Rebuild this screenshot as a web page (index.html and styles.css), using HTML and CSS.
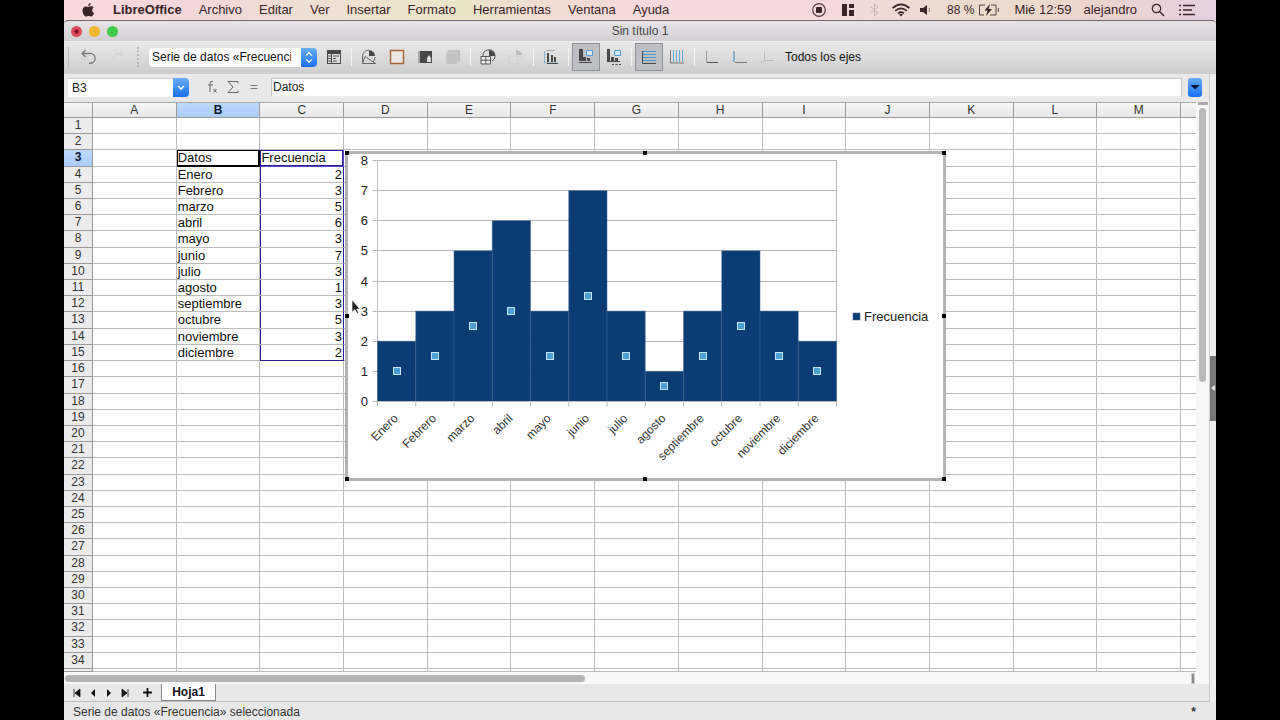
FILE: index.html
```
<!DOCTYPE html>
<html lang="es">
<head>
<meta charset="utf-8">
<title>Sin título 1</title>
<link rel="stylesheet" href="styles.css">
</head>
<body>
<div class="desktop">
  <header class="menubar">
    <svg class="apple" viewBox="0 0 14 16" width="14" height="16" aria-hidden="true"><path d="M9.8 1c.1 1.500-1.100 2.900-2.600 2.900C7 2.500 8.400 1.100 9.800 1zM7.300 5c.7 0 1.500-.7 2.800-.7 1 0 2 .5 2.600 1.400-2.300 1.300-1.900 4.500.4 5.400-.5 1.400-1.700 3.500-3 3.500-.9 0-1.300-.6-2.400-.6s-1.500.6-2.400.6C3.600 14.600 1.500 11.500 1.500 8.700 1.500 5.900 3.200 4.400 4.900 4.400 6 4.400 6.700 5 7.300 5z" fill="#3a2427"/></svg>
    <nav class="menus">
      <button class="app-name">LibreOffice</button>
      <button>Archivo</button>
      <button>Editar</button>
      <button>Ver</button>
      <button>Insertar</button>
      <button>Formato</button>
      <button>Herramientas</button>
      <button>Ventana</button>
      <button>Ayuda</button>
    </nav>
    <div class="tray">
      <svg width="16" height="16" viewBox="0 0 16 16"><circle cx="8" cy="8" r="6.300" fill="none" stroke="#5a4044" stroke-width="1.200"/><rect x="5" y="5" width="6" height="6" rx="1" fill="#3a2427"/></svg>
      <svg width="14" height="14" viewBox="0 0 14 14"><path d="M1 1h5v12H1zM8 1h5v4H8zM8 7h5v6H8z" fill="#3a2427"/></svg>
      <svg width="12" height="14" viewBox="0 0 12 14"><path d="M2 4l7 6-3.500 3V1L9 4l-7 6" fill="none" stroke="#c9b3b4"/></svg>
      <svg class="wifi" width="20" height="14" viewBox="0 0 20 14"><g fill="none" stroke="#3a2427" stroke-width="1.700"><path d="M1.500 5.200q8.500-7.500 17 0M4.200 7.800q5.800-5 11.600 0M7 10.300q3-2.500 6 0"/></g><path d="M8 11.500q2-1.500 4 0L10 13.500z" fill="#3a2427"/></svg>
      <svg class="sound" width="14" height="12" viewBox="0 0 14 12"><path d="M1 4h3l4-3v10L4 8H1z" fill="#3a2427"/><path d="M10 4q1.500 2 0 4" fill="none" stroke="#8d7477"/></svg>
      <span class="battery-level">88 %</span>
      <svg class="battery" width="22" height="14" viewBox="0 0 22 14"><path d="M7 2H1.500v10H6M13 2h5v10h-6M20.300 5v4" fill="none" stroke="#5a4044"/><path d="M12 1L6.500 7.500h3L8 13l6-7h-3.300z" fill="#3a2427"/></svg>
      <span class="clock">Mié 12:59</span>
      <span class="user">alejandro</span>
      <svg class="search" width="14" height="14" viewBox="0 0 14 14"><circle cx="5.500" cy="5.500" r="4.200" fill="none" stroke="#3a2427" stroke-width="1.200"/><path d="M8.800 8.800L13 13" stroke="#3a2427" stroke-width="1.500"/></svg>
      <svg width="16" height="12" viewBox="0 0 16 12"><path d="M0 1.500h2M0 6h2M0 10.500h2M4 1.500h12M4 6h9M4 10.500h12" stroke="#3a2427" stroke-width="1.500"/></svg>
    </div>
  </header>

  <main class="window">
    <div class="titlebar">
      <div class="lights">
        <button class="light close" aria-label="Cerrar"></button>
        <button class="light minimize" aria-label="Minimizar"></button>
        <button class="light expand" aria-label="Ampliar"></button>
      </div>
      <h1>Sin título 1</h1>
    </div>

    <div class="toolbar">
      <span class="edge"></span>
      <button class="tool wide" aria-label="Deshacer"><svg viewBox="0 0 18 18"><path d="M6.500 2L3 5.500 6.500 9M3 5.500h7a5 5 0 0 1 3 9.500l-3 .5" fill="none" stroke="#777" stroke-width="1.300"/></svg></button>
      <button class="tool wide" aria-label="Rehacer"><svg viewBox="0 0 18 18"><path d="M11 3l3 3-3 3M14 6H9q-4 0-4 5" fill="none" stroke="#cfcfcf"/></svg></button>
      <span class="grip"></span>
      <span class="picker">
        <select aria-label="Elemento del gráfico"><option>Serie de datos «Frecuencia»</option></select>
        <svg viewBox="0 0 16 20" aria-hidden="true"><path d="M5 8l3-3 3 3M5 12l3 3 3-3" fill="none" stroke="#fff" stroke-width="1.400"/></svg>
      </span>
      <button class="tool" aria-label="Formato de selección"><svg viewBox="0 0 18 18"><path d="M2 2h14v14H2z" fill="#484848"/><path d="M3 6h3v9H3zM7 6h8v9H7z" fill="#ddd"/><path d="M3 8h3M3 10.500h3M3 13h3M8 8h6M8 10.500h3M8 13h4" stroke="#555"/></svg></button>
      <span class="sep"></span>
      <button class="tool" aria-label="Tipo de gráfico"><svg viewBox="0 0 18 18"><path d="M2.500 14.500V8A6.500 6.500 0 0 1 9 2M15 9q0 3-2 5M2.500 15.500h13L5 8.500z" fill="none" stroke="#666"/><path d="M9 2v6h6q0-5-6-6z" fill="#484848"/></svg></button>
      <button class="tool" aria-label="Área del gráfico"><svg viewBox="0 0 18 18"><path d="M2.500 2.500h13v13h-13z" fill="#e9e6e3" stroke="#a86538" stroke-width="1.400"/></svg></button>
      <button class="tool" aria-label="Plano lateral"><svg viewBox="0 0 18 18"><path d="M2 3h14v12H2z" fill="#484848"/><path d="M2 3h2v12H2z" fill="#aaa"/><path d="M13 7l2 3v4h-4v-4z" fill="#ddd"/></svg></button>
      <button class="tool" aria-label="Vista 3D" disabled><svg viewBox="0 0 18 18"><path d="M2 5l3-3h11v11l-3 3H2z" fill="#c2c2c2"/><path d="M2 5h11v11" fill="none" stroke="#cecece"/></svg></button>
      <span class="sep"></span>
      <button class="tool" aria-label="Tabla de datos"><svg viewBox="0 0 18 18"><path d="M4 8a6 6 0 1 1 9 5" fill="none" stroke="#555"/><path d="M10 2v6h6q0-5-6-6z" fill="#484848"/><path d="M2 8.500h9.500v7.500H2zM2 12.200h9.500M6.800 8.500V16" fill="#eee" stroke="#555"/></svg></button>
      <button class="tool" aria-label="Datos" disabled><svg viewBox="0 0 18 18"><path d="M9 2v5h6q0-4-6-5z" fill="#bcbcbc"/><path d="M2 8h9v8H2zM11 8h4v4" fill="none" stroke="#cfcfcf"/></svg></button>
      <span class="sep"></span>
      <button class="tool" aria-label="Títulos"><svg viewBox="0 0 18 18"><path d="M2.500 3v12h12" fill="none" stroke="#8bb5d3"/><path d="M4 2.500h9" stroke="#aaa"/><path d="M5 5h2v9H5zM9 7h2v7H9zM12 9h2v5h-2zM5 15h11v1H5z" fill="#484848"/></svg></button>
      <span class="sep"></span>
      <button class="tool active" aria-label="Leyenda" aria-pressed="true"><svg viewBox="0 0 18 18"><path d="M2 1h4v12H2zM6 9h3v4H6zM10 10h3v3h-3zM2 14h13v1H2z" fill="#484848"/><path d="M9.500 2.500h6v5h-6z" fill="#d7e8f2" stroke="#4aa0d5"/></svg></button>
      <button class="tool" aria-label="Eje de leyenda"><svg viewBox="0 0 18 18"><path d="M2 1h3v12H2zM6 9h3v4H6zM10 10h3v3h-3zM2 13h13v1H2z" fill="#484848"/><path d="M9.500 2.500h6v5h-6z" fill="#d7e8f2" stroke="#4aa0d5"/><path d="M7 16.500h9" stroke="#444" stroke-dasharray="2 1.500"/></svg></button>
      <span class="sep"></span>
      <button class="tool active" aria-label="Cuadrículas horizontales" aria-pressed="true"><svg viewBox="0 0 18 18"><path d="M3 3.500h13M3 6.500h13M3 9.500h13M3 12.500h13" stroke="#4a9acb"/><path d="M2.500 3v12.500H16" fill="none" stroke="#484848"/></svg></button>
      <button class="tool" aria-label="Cuadrículas verticales"><svg viewBox="0 0 18 18"><path d="M5.500 2v12M8.500 2v12M11.500 2v12M14.500 2v12" stroke="#5da9d6"/><path d="M2.500 2v13H16" fill="none" stroke="#777"/></svg></button>
      <span class="sep"></span>
      <button class="tool" aria-label="Eje X"><svg viewBox="0 0 18 18"><path d="M3.500 3v11.500" stroke="#999"/><path d="M4 14.500h11" stroke="#555"/></svg></button>
      <button class="tool" aria-label="Eje Y"><svg viewBox="0 0 18 18"><path d="M3 3v11" stroke="#6aa2c8" stroke-width="1.500"/><path d="M4 14.500h12" stroke="#777"/></svg></button>
      <button class="tool" aria-label="Eje Z" disabled><svg viewBox="0 0 18 18"><path d="M5.500 4v8.500H15M5 13l-3 2" fill="none" stroke="#bdbdbd"/></svg></button>
      <button class="axes">Todos los ejes</button>
    </div>

    <div class="workspace">
      <div class="document">
        <div class="formula-bar">
          <span class="namebox">
            <input value="B3" aria-label="Cuadro de nombre">
            <button aria-label="Mostrar nombres"><svg viewBox="0 0 16 18"><path d="M5 8l3 3 3-3" fill="none" stroke="#fff" stroke-width="1.400"/></svg></button>
          </span>
          <button class="fx" aria-label="Asistente de funciones"><svg viewBox="0 0 14 16"><path d="M8 2.500q-3-1-3 2V13M3 6h5M8.500 10l3 3.500M11.500 10l-3 3.500" fill="none" stroke="#666"/></svg></button>
          <button class="fx" aria-label="Suma"><svg viewBox="0 0 14 16"><path d="M12 4.500V2.500H2l5 5.500-5 5.500h10v-2" fill="none" stroke="#666"/></svg></button>
          <button class="fx" aria-label="Función"><svg viewBox="0 0 14 16"><path d="M3.500 6.500h7M3.500 9.500h7" stroke="#777"/></svg></button>
          <input class="formula" value="Datos" aria-label="Línea de entrada">
          <button class="expand-formula" aria-label="Expandir barra de fórmulas"><svg viewBox="0 0 14 18"><path d="M2.500 7h9L7 11.500z" fill="#06133a"/></svg></button>
        </div>

        <div class="sheet-area">
          <div class="sheet-view">
            <table class="sheet">
              <thead></thead>
              <tbody></tbody>
            </table>
            <svg class="chart" viewBox="0 0 601 330" role="img" aria-label="Gráfico de Frecuencia"></svg>
            <svg class="pointer" viewBox="0 0 10 16" aria-hidden="true"><path d="M1 1v12l3-2.500 2 4 1.500-.8-1.800-3.700H9z" fill="#222" stroke="#eee" stroke-width=".7"/></svg>
          </div>
          <div class="vscroll"><span class="splitter"></span><span class="thumb"></span></div>
        </div>

        <div class="hscroll"><span class="thumb"></span><span class="splitter"></span></div>

        <div class="tabs">
          <button aria-label="Primera hoja"><svg viewBox="0 0 10 10"><path d="M2 1v8M8 1v8L3 5z" fill="#111" stroke="#111" stroke-width=".8"/></svg></button>
          <button aria-label="Hoja anterior"><svg viewBox="0 0 10 10"><path d="M7 1v8L3 5z" fill="#111"/></svg></button>
          <button aria-label="Hoja siguiente"><svg viewBox="0 0 10 10"><path d="M3 1v8l4-4z" fill="#111"/></svg></button>
          <button aria-label="Última hoja"><svg viewBox="0 0 10 10"><path d="M8 1v8M2 1v8l5-4z" fill="#111" stroke="#111" stroke-width=".8"/></svg></button>
          <button class="add" aria-label="Añadir hoja"><svg viewBox="0 0 10 10"><path d="M5 1v8M1 5h8" stroke="#111" stroke-width="1.600"/></svg></button>
          <button class="tab">Hoja1</button>
        </div>
      </div>
      <aside class="side-strip"><button aria-label="Mostrar barra lateral"><svg viewBox="0 0 6 8"><path d="M5 1v6L1 4z" fill="#e6e6e6"/></svg></button></aside>
    </div>

    <footer class="status">
      <span>Serie de datos «Frecuencia» seleccionada</span>
      <span class="modified">*</span>
    </footer>
  </main>
</div>
<script src="app.js"></script>
</body>
</html>
```
FILE: styles.css
```
* { box-sizing: border-box; }
body {
  margin: 0;
  background: #000;
  color: #222;
  font: 12px/16px "Liberation Sans", Arial, sans-serif;
}
button, input, select { font: inherit; color: inherit; margin: 0; padding: 0; border: 0; background: none; }
svg { display: block; }
.desktop {
  height: 100vh;
  margin: 0 5vw;
  display: flex;
  flex-direction: column;
  overflow: hidden;
}

.menubar {
  flex: none;
  height: 20px;
  display: flex;
  align-items: center;
  padding: 0 21px 0 17px;
  font-size: 13px;
  color: #3a2427;
  white-space: nowrap;
  background: linear-gradient(90deg, #f6d9dc 0%, #f3d8d9 12%, #eee2cf 26%, #e9e4c8 34%, #f1dcd2 42%, #f5dadd 52%, #f3d9dd 66%, #ecdccb 80%, #ecd4cf 90%, #e6cfe0 100%);
}
.menus { display: flex; gap: 17px; margin-left: 18px; }
.app-name { font-weight: bold; }
.tray { margin-left: auto; display: flex; align-items: center; }
.tray > * { margin-left: 14px; }
.tray > .wifi { margin-left: 10px; }
.tray > .sound { margin-left: 8px; }
.tray > .battery-level { font-size: 12px; }
.tray > .battery { margin-left: 4px; }
.tray > .user { margin-left: 12px; }

.window { flex: 1; min-height: 0; display: flex; flex-direction: column; background: #e8e8e8; }
.titlebar {
  flex: none;
  height: 21px;
  display: grid;
  grid-template-columns: 1fr auto 1fr;
  align-items: center;
  border-top: 1px solid #75696b;
  border-radius: 4px 4px 0 0;
  background: linear-gradient(#e6e4e6, #d2d0d2);
}
.titlebar h1 { margin: 0; font-size: 12px; font-weight: normal; color: #444; }
.lights { display: flex; gap: 7px; padding-left: 7px; }
.light { width: 11px; height: 11px; border-radius: 50%; }
.close { background: radial-gradient(circle, #7b1020 0 1px, #e04b5e 3px); }
.minimize { background: #f5b52e; }
.expand { background: #3ecb45; }

.toolbar {
  flex: none;
  height: 33px;
  display: flex;
  align-items: center;
  padding-bottom: 2px;
  border-top: 1px solid #efefef;
  background: linear-gradient(#e9e9e9, #cdcdcd);
  white-space: nowrap;
}
.edge { width: 5px; height: 20px; border-right: 1px solid #bbb; margin-right: 4px; flex: none; }
.tool { width: 28px; height: 28px; display: grid; place-items: center; flex: none; border: 1px solid transparent; }
.tool svg { width: 18px; height: 18px; }
.tool.wide { width: 30px; }
.tool.active { background: #bebfc2; border-color: #8f9093; }
.sep { width: 7px; height: 18px; flex: none; background: linear-gradient(#f2f2f2, #f2f2f2) center / 1px 100% no-repeat; }
.grip { width: 2px; height: 20px; margin: 0 10px 0 4px; border-left: 2px dotted #bbb; }
.picker { position: relative; width: 168px; height: 19px; flex: none; margin-right: 3px; }
.picker select {
  appearance: none;
  width: 100%;
  height: 100%;
  padding: 0 26px 0 3px;
  border-radius: 4px;
  background: #fff;
  color: #111;
}
.picker svg { position: absolute; right: 0; top: 0; width: 16px; height: 19px; pointer-events: none; border-radius: 0 4px 4px 0; background: linear-gradient(#68adf8, #1a6ff0); }
.axes { margin-left: 3px; color: #111; }

.workspace { flex: 1; min-height: 0; display: flex; }
.document { flex: 1; min-width: 0; display: flex; flex-direction: column; }
.formula-bar { flex: none; height: 28px; display: flex; align-items: center; padding: 0 7px 3px 4px; border-top: 1px solid #ececec; }
.namebox { display: flex; width: 121px; height: 19px; margin-right: 12px; }
.namebox input { flex: 1; min-width: 0; padding-left: 4px; background: #fff; border-top: 1px solid #ccc; }
.namebox button { width: 16px; border-radius: 0 4px 4px 0; background: linear-gradient(#68adf8, #1a6ff0); }
.fx { width: 21px; display: grid; place-items: center; }
.fx svg { width: 14px; height: 16px; }
.formula { flex: 1; min-width: 0; height: 19px; margin: 0 6px 0 7px; padding-left: 1px; background: #fff; border: 1px solid #c4c4c4; border-bottom-color: #eee; }
.expand-formula { width: 14px; height: 19px; border-radius: 3px; background: linear-gradient(#68adf8, #1a6ff0); }

.sheet-area { flex: 1; min-height: 0; display: flex; }
.sheet-view { flex: 1; min-width: 0; position: relative; overflow: hidden; background: #fff; }
.sheet { display: flex; flex-direction: column; height: 100%; }
.sheet thead { display: block; flex: none; height: 16px; }
.sheet tbody { flex: 1; min-height: 0; display: grid; grid-template-rows: repeat(34, minmax(0, 1fr)) 3px; }
.sheet tr { display: grid; grid-template-columns: 29px repeat(13, minmax(0, 1fr)) 15px; min-height: 0; overflow: hidden; }
.sheet thead tr { height: 16px; }
.sheet th, .sheet td { display: block; padding: 0 1px; min-height: 0; border: solid #bcbcbc; border-width: 0 1px 1px 0; line-height: 15px; white-space: nowrap; overflow: hidden; }
.sheet td { font-size: 13px; color: #111; }
.sheet th { font-weight: normal; text-align: center; background: #ececec; border-color: #9a9a9a; color: #333; }
.sheet thead th { border-top: 1px solid #aaa; line-height: 14px; background: linear-gradient(#f7f7f7, #e6e6e6); }
.sheet tr > :last-child { border-right: 0; }
.sheet th.selected { font-weight: bold; color: #0a1633; background: linear-gradient(#bcdafd, #a9cdf9); }
.sheet td.number { text-align: right; }
.sheet td.cursor { box-shadow: inset 0 0 0 1px #000; border-color: #000; }
.sheet td.series-name { box-shadow: inset 0 0 0 1px #2b1e96; border-color: #5a46c8; }
.sheet td.series { box-shadow: inset 1px 0 #2b1e96; border-right-color: #2b1e96; }
.sheet td.series-end { border-bottom-color: #2b1e96; }

.chart { position: absolute; left: 281px; top: 49px; width: 601px; height: 330px; }
.pointer { position: absolute; left: 287px; top: 197px; width: 10px; height: 16px; }
.frame { fill: #fff; stroke: #b3b3b3; stroke-width: 3px; }
.handle { fill: #000; }
.rule { stroke: #b8b8b8; stroke-width: 1px; fill: none; }
.bar { fill: #0b3c73; stroke: #3d6391; stroke-width: 1px; stroke-opacity: .5; }
.point { fill: #4b9fd2; stroke: #c5e6f8; stroke-width: 1px; }
.value { font-size: 13px; text-anchor: end; fill: #222; }
.category { font-size: 12px; text-anchor: end; fill: #333; }
.legend { font-size: 13px; fill: #222; }

.vscroll { width: 13px; display: flex; flex-direction: column; align-items: center; background: #f7f7f7; }
.vscroll .splitter { width: 10px; height: 3px; background: #aaa; margin-bottom: 3px; }
.vscroll .thumb { width: 7px; height: 48%; border-radius: 4px; background: #bababa; }
.hscroll { flex: none; height: 12px; display: flex; align-items: center; padding: 0 14px 0 1px; background: #f8f8f8; }
.hscroll .thumb { width: 46%; height: 7px; border-radius: 4px; background: #b5b5b5; }
.hscroll .splitter { width: 4px; height: 11px; margin-left: auto; background: #888; border: 1px solid #ccc; }

.tabs { flex: none; height: 18px; display: flex; align-items: stretch; padding-left: 5px; border-bottom: 1px solid #bbb; }
.tabs button { width: 16px; display: grid; place-items: center; }
.tabs svg { width: 10px; height: 10px; }
.tabs .add { width: 28px; }
.tabs .add svg { width: 11px; height: 11px; }
.tabs .tab { width: 55px; background: #fff; border: solid #888; border-width: 0 1px 1px; font-weight: bold; color: #111; }

.side-strip { width: 7px; display: flex; align-items: center; border-left: 1px solid #ccc; background: #eee; }
.side-strip button { width: 6px; height: 65px; background: #777; display: grid; place-items: center; }
.side-strip svg { width: 6px; height: 8px; }
.status { flex: none; height: 18px; display: flex; justify-content: space-between; align-items: center; padding: 1px 20px 0 9px; color: #333; }
.modified { font-weight: bold; }
```
FILE: app.js
```
const series = [
  ["Enero", 2], ["Febrero", 3], ["marzo", 5], ["abril", 6], ["mayo", 3], ["junio", 7],
  ["julio", 3], ["agosto", 1], ["septiembre", 3], ["octubre", 5], ["noviembre", 3], ["diciembre", 2]
];
const columns = [..."ABCDEFGHIJKLM"];

const headCells = columns.map(c => `<th scope="col"${c === "B" ? ' class="selected"' : ""}>${c}</th>`).join("");
document.querySelector(".sheet thead").innerHTML = `<tr><th></th>${headCells}<th></th></tr>`;

function cell(row, column) {
  if (row === 3 && column === "B") return '<td class="cursor">Datos</td>';
  if (row === 3 && column === "C") return '<td class="series-name">Frecuencia</td>';
  const entry = series[row - 4];
  if (entry && column === "B") return `<td>${entry[0]}</td>`;
  if (entry && column === "C") return `<td class="number series${row === 15 ? " series-end" : ""}">${entry[1]}</td>`;
  return "<td></td>";
}
let rows = "";
for (let r = 1; r <= 35; r++) {
  const label = r === 35 ? "" : r;
  rows += `<tr><th scope="row"${r === 3 ? ' class="selected"' : ""}>${label}</th>${columns.map(c => cell(r, c)).join("")}<td></td></tr>`;
}
document.querySelector(".sheet tbody").innerHTML = rows;

const plot = { left: 32.5, right: 491.5, top: 9.5, bottom: 250.5 };
const unit = (plot.bottom - plot.top) / 8;
const band = (plot.right - plot.left) / series.length;
let drawing = '<rect class="frame" x="1.5" y="1.5" width="598" height="327"/>';
for (let v = 0; v <= 8; v++) {
  const y = Math.floor(plot.bottom - v * unit) + 0.5;
  drawing += `<path class="rule" d="M${plot.left - 5} ${y}H${plot.right}"/><text class="value" x="23" y="${y + 4.5}">${v}</text>`;
}
drawing += `<path class="rule" d="M${plot.left} ${plot.top}V${plot.bottom}M${plot.right} ${plot.top}V${plot.bottom}"/>`;
series.forEach(([name, value], i) => {
  const x = plot.left + i * band;
  const height = value * unit;
  const middle = x + band / 2;
  drawing += `<rect class="bar" x="${x}" y="${plot.bottom - height}" width="${band}" height="${height}"/>`;
  drawing += `<path class="rule" d="M${x} ${plot.bottom}v5"/>`;
  drawing += `<rect class="point" x="${Math.round(middle) - 3.5}" y="${Math.round(plot.bottom - height / 2) - 3.5}" width="7" height="7"/>`;
  drawing += `<text class="category" transform="translate(${middle + 2} 268) rotate(-45)">${name}</text>`;
});
drawing += `<path class="rule" d="M${plot.left} ${plot.bottom}H${plot.right}v5"/>`;
drawing += '<rect class="bar" x="508" y="162" width="7" height="7"/><text class="legend" x="519" y="170">Frecuencia</text>';
for (const [x, y] of [[0, 0], [298, 0], [597, 0], [0, 163], [597, 163], [0, 326], [298, 326], [597, 326]]) {
  drawing += `<rect class="handle" x="${x}" y="${y}" width="4" height="4"/>`;
}
document.querySelector(".chart").innerHTML = drawing;
```
